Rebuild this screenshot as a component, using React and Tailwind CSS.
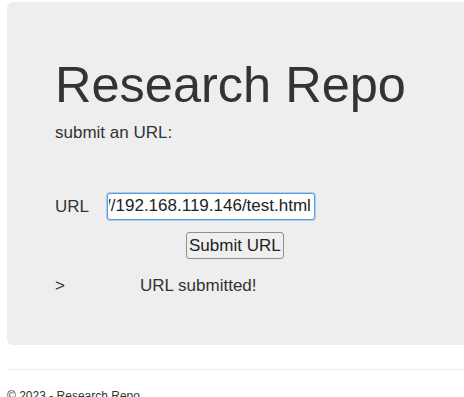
import { useEffect, useRef } from "react";

const App = () => {
  const inputRef = useRef(null);

  useEffect(() => {
    const el = inputRef.current;
    if (el) {
      el.focus();
      el.setSelectionRange(el.value.length, el.value.length);
      el.scrollLeft = el.scrollWidth;
    }
  }, []);

  return (
    <div className="h-[397px] w-[464px] overflow-hidden bg-white font-['Liberation_Sans',Arial,sans-serif] text-[#333]">
      <div className="w-[900px] pl-[7px] pt-[2px]">
        <div className="h-[343px] rounded-[6px] bg-[#eeeeee] px-[48px] pt-[55px]">
          <h1 className="text-[50.5px] leading-[1.1]">Research Repo</h1>
          <p className="mt-[8px] text-[17px] leading-[1.42857]">submit an URL:</p>

          <div className="mt-[48px] flex items-center">
            <label className="w-[52px] text-[17px]">URL</label>
            <input
              ref={inputRef}
              defaultValue="http://192.168.119.146/test.html"
              className="h-[27px] w-[208px] rounded-[3px] border border-[#5b9dd9] bg-white pl-[1px] pr-[3px] text-[17px] text-[#222] shadow-[0_0_0_1px_#a9cdf0] outline-none"
            />
          </div>

          <div className="mt-[12px] pl-[131px]">
            <button className="h-[27px] rounded-[3px] border border-[#8f8f8f] bg-[#efefef] px-[2px] text-[17px] leading-none text-[#222]">
              Submit URL
            </button>
          </div>

          <div className="mt-[14px] flex text-[17px]">
            <span className="w-[85px]">&gt;</span>
            <span>URL submitted!</span>
          </div>
        </div>

        <hr className="mt-[24px] border-t border-[#eeeeee]" />
        <footer className="mt-[17px] text-[12px] text-[#333]">© 2023 - Research Repo</footer>
      </div>
    </div>
  );
};

export default App;
